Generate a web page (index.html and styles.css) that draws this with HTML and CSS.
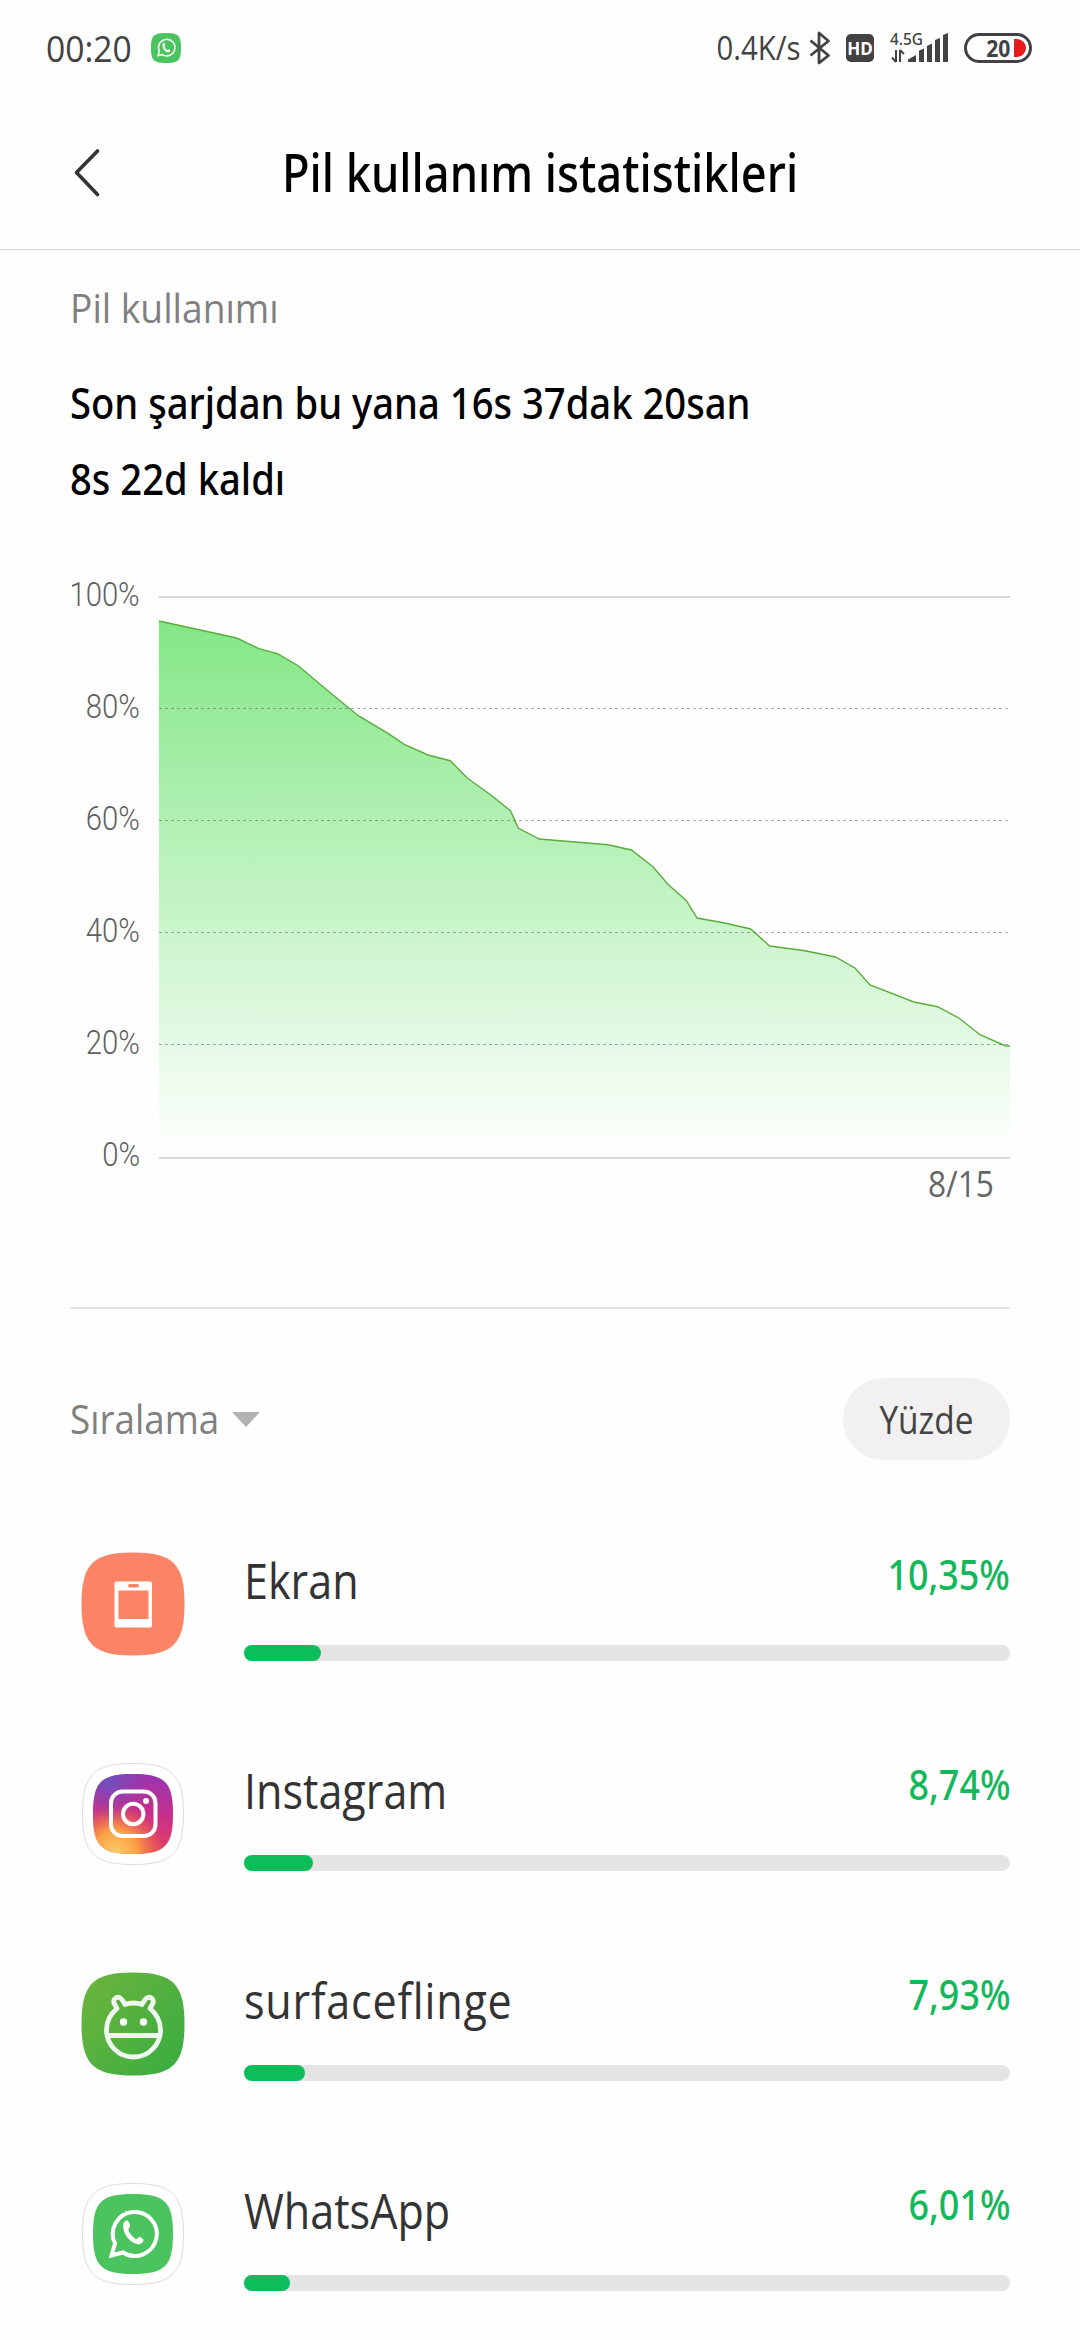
FILE: index.html
```html
<!DOCTYPE html>
<html lang="tr">
<head>
  <meta charset="UTF-8" />
  <meta name="viewport" content="width=device-width, initial-scale=1.0"/>
  <title>Pil kullanım istatistikleri</title>
  <link rel="stylesheet" href="styles.css">
</head>
<body>
  <div class="status-bar">
    <span class="clock">00:20</span>
    <svg class="notif-icon" viewBox="0 0 80 80">
      <path d="M40 0C73 0 80 7 80 40S73 80 40 80 0 73 0 40 7 0 40 0Z" fill="#4bc35f"/>
      <path d="M18.500 60.500L22 48.500A22 22 0 1 1 30 57.500Z" fill="none" stroke="#fff" stroke-width="4" stroke-linejoin="round"/>
      <path d="M31.500 27C35 24.500 36.500 27 37.500 32 38 34 35.500 34.500 36 36.500 37.500 40.500 41 44 44 45.500 46 46 46 42.500 48 43.500L51.500 46C52 49 48 52 44.500 51.500 36 50 28.500 38 31.500 27Z" fill="#fff"/>
    </svg>

    <div class="status-right">
      <span class="speed">0.4K/s</span>
      <svg class="bluetooth" viewBox="0 0 22 34">
        <path d="M1.500 9.500L19.500 24.500 10 32V2L19.500 10 1.500 24.500" fill="none" stroke="#424242" stroke-width="2.800" stroke-linejoin="round"/>
      </svg>
      <span class="hd">HD</span>
      <svg class="signal" viewBox="0 0 60 32">
        <text x="0" y="13" class="net" textLength="33" lengthAdjust="spacingAndGlyphs">4.5G</text>
        <path d="M6 18V30M6 30L2 25.500M10 30V18M10 18L14 22" fill="none" stroke="#424242" stroke-width="2"/>
        <path d="M18 30v-2.500l8-4.500v7zM29 30V18.500l5-2V30zM37 30V14l5-2.500V30zM45 30V8l5-2V30zM53 30V3l5-2V30z" fill="#424242"/>
      </svg>
      <div class="battery">
        <span>20</span>
        <i class="battery-level"></i>
      </div>
    </div>
  </div>

  <header class="title-bar">
    <svg class="back" viewBox="0 0 26 48">
      <path d="M23.500 2L2.500 23.500 23.500 45.500" fill="none" stroke="#333" stroke-width="3.600" stroke-linecap="round" stroke-linejoin="round"/>
    </svg>
    <h1>Pil kullanım istatistikleri</h1>
  </header>

  <main>
    <h2>Pil kullanımı</h2>
    <p class="summary">Son şarjdan bu yana 16s 37dak 20san</p>
    <p class="summary">8s 22d kaldı</p>

    <div class="chart">
      <div class="y-axis">
        <span>100%</span>
        <span>80%</span>
        <span>60%</span>
        <span>40%</span>
        <span>20%</span>
        <span>0%</span>
      </div>
      <div class="plot">
        <svg viewBox="159 596 851 563">
          <defs>
            <linearGradient id="fade" gradientUnits="userSpaceOnUse" x1="0" y1="621" x2="0" y2="1158">
              <stop offset="0" stop-color="#83e786"/>
              <stop offset="1" stop-color="#fff"/>
            </linearGradient>
          </defs>
          <path d="M159 621L208.200 631.700 236.600 638 258.900 648.700 277.500 653.700 298.500 666 327.200 690.300 358.300 715.700 388 733.300 404.300 744.300 428 755 450.300 760.700 467.500 778.300 491.200 795.300 510.500 810.700 518.200 828 539.200 839 607.900 844.700 631.400 850 652.900 866.700 667.900 884.300 686.400 900.700 697.100 918 724.600 923 750.700 929 769.600 946 805 950.700 835.400 957 855 968 870 985 913.900 1002 937.500 1006.700 958.900 1018 980 1034.700 1005 1045.700 1010 1046V1158H159Z" fill="url(#fade)"/>
          <path class="curve" d="M159 621L208.200 631.700 236.600 638 258.900 648.700 277.500 653.700 298.500 666 327.200 690.300 358.300 715.700 388 733.300 404.300 744.300 428 755 450.300 760.700 467.500 778.300 491.200 795.300 510.500 810.700 518.200 828 539.200 839 607.900 844.700 631.400 850 652.900 866.700 667.900 884.300 686.400 900.700 697.100 918 724.600 923 750.700 929 769.600 946 805 950.700 835.400 957 855 968 870 985 913.900 1002 937.500 1006.700 958.900 1018 980 1034.700 1005 1045.700 1010 1046"/>
          <path class="grid-edge" d="M159 597H1010M159 1158H1010"/>
          <path class="grid-dash" d="M159 708.500H1010M159 820.500H1010M159 932.500H1010M159 1044.500H1010"/>
        </svg>
        <span class="x-label">8/15</span>
      </div>
    </div>

    <div class="sort-row">
      <div class="sort"><span>Sıralama</span><i class="caret"></i></div>
      <button class="pill"><span>Yüzde</span></button>
    </div>

    <ul class="apps">
      <li class="app">
        <svg class="app-icon" viewBox="0 0 104 104">
          <path d="M52 0.500C92 0.500 103.500 12 103.500 52S92 103.500 52 103.500 0.500 92 0.500 52 12 0.500 52 0.500Z" fill="#fb8467"/>
          <rect x="33.500" y="29.500" width="37.500" height="46" rx="2" fill="#fff"/>
          <rect x="37.500" y="38.500" width="30" height="28.500" fill="#fb8467"/>
          <rect x="47" y="32" width="11" height="3.500" rx="1.700" fill="#fb8467"/>
        </svg>
        <div class="app-body">
          <div class="app-line"><span class="name">Ekran</span><span class="percent">10,35%</span></div>
          <div class="track"><div class="fill" style="width:10%"></div></div>
        </div>
      </li>
      <li class="app">
        <svg class="app-icon" viewBox="0 0 104 104">
          <defs>
            <linearGradient id="ig" x1="0.550" y1="0" x2="0.400" y2="1">
              <stop offset="0" stop-color="#9a34b0"/>
              <stop offset="0.500" stop-color="#cc2f86"/>
              <stop offset="1" stop-color="#e8475a"/>
            </linearGradient>
            <radialGradient id="ig-warm" cx="0.280" cy="0.980" r="0.620">
              <stop offset="0" stop-color="#fbca68"/>
              <stop offset="0.450" stop-color="#fba045"/>
              <stop offset="1" stop-color="#f0603f" stop-opacity="0"/>
            </radialGradient>
            <radialGradient id="ig-cold" cx="0.200" cy="0.080" r="0.500">
              <stop offset="0" stop-color="#6a52c0"/>
              <stop offset="1" stop-color="#8a3fb8" stop-opacity="0"/>
            </radialGradient>
          </defs>
          <path class="app-ring" d="M52 1.500C91 1.500 102.500 13 102.500 52S91 102.500 52 102.500 1.500 91 1.500 52 13 1.500 52 1.500Z"/>
          <path d="M52 12C84 12 92 20 92 52S84 92 52 92 12 84 12 52 20 12 52 12Z" fill="url(#ig)"/>
          <path d="M52 12C84 12 92 20 92 52S84 92 52 92 12 84 12 52 20 12 52 12Z" fill="url(#ig-warm)"/>
          <path d="M52 12C84 12 92 20 92 52S84 92 52 92 12 84 12 52 20 12 52 12Z" fill="url(#ig-cold)"/>
          <rect x="30" y="29.500" width="44.500" height="44.500" rx="11.500" fill="none" stroke="#fff" stroke-width="4"/>
          <circle cx="52.200" cy="52" r="10.200" fill="none" stroke="#fff" stroke-width="4"/>
          <circle cx="65" cy="39" r="3" fill="#fff"/>
        </svg>
        <div class="app-body">
          <div class="app-line"><span class="name">Instagram</span><span class="percent">8,74%</span></div>
          <div class="track"><div class="fill" style="width:9%"></div></div>
        </div>
      </li>
      <li class="app">
        <svg class="app-icon" viewBox="0 0 104 104">
          <defs>
            <linearGradient id="droid" x1="0" y1="0.100" x2="1" y2="0.900">
              <stop offset="0" stop-color="#6cb43c"/>
              <stop offset="1" stop-color="#39ac40"/>
            </linearGradient>
          </defs>
          <path d="M52 0.500C92 0.500 103.500 12 103.500 52S92 103.500 52 103.500 0.500 92 0.500 52 12 0.500 52 0.500Z" fill="url(#droid)"/>
          <g fill="none" stroke="#eff8ee" stroke-width="4.800" stroke-linejoin="round" stroke-linecap="round">
            <path d="M36 36.500L33.200 31.500C31.500 27.500 35 24.500 38.500 25.500 40.500 26.200 41.500 28.500 44 32.500Q52.500 29.500 61 32.500C63.500 28.500 64.500 26.200 66.500 25.500 70 24.500 73.500 27.500 71.800 31.500L69 36.500C75 41.500 79.500 49 79.500 58A27 27 0 0 1 25.500 58C25.500 49 30 41.500 36 36.500Z"/>
            <path d="M26.500 63.500H78.500"/>
          </g>
          <circle cx="42.500" cy="50" r="3.700" fill="#fff"/>
          <circle cx="62.500" cy="50" r="3.700" fill="#fff"/>
        </svg>
        <div class="app-body">
          <div class="app-line"><span class="name loose">surfaceflinge</span><span class="percent">7,93%</span></div>
          <div class="track"><div class="fill" style="width:8%"></div></div>
        </div>
      </li>
      <li class="app">
        <svg class="app-icon" viewBox="0 0 104 104">
          <path class="app-ring" d="M52 1.500C91 1.500 102.500 13 102.500 52S91 102.500 52 102.500 1.500 91 1.500 52 13 1.500 52 1.500Z"/>
          <path d="M52 12C84 12 92 20 92 52S84 92 52 92 12 84 12 52 20 12 52 12Z" fill="#4bc35f"/>
          <path d="M30.500 73.500L34 61.500A22 22 0 1 1 42 70.500Z" fill="none" stroke="#fff" stroke-width="4" stroke-linejoin="miter"/>
          <path d="M43 40C46 37 48 38.500 49 43 49.500 46 46.500 46.500 47.500 48.500 49 52 52 55.500 55 57 57.500 57 57.500 53.500 59.500 55L62.500 57.500C62.500 61 59 63 55.500 62 46.500 59 40 48.500 43 40Z" fill="#fff"/>
        </svg>
        <div class="app-body">
          <div class="app-line"><span class="name">WhatsApp</span><span class="percent">6,01%</span></div>
          <div class="track"><div class="fill" style="width:6%"></div></div>
        </div>
      </li>
    </ul>
  </main>
</body>
</html>
```

FILE: styles.css
```css
* {
  box-sizing: border-box;
}

body {
  margin: 0;
  background: #fefefe;
  color: #000;
  font-family: "Open Sans", "Noto Sans", sans-serif;
  font-variant-ligatures: none;
}

svg {
  display: block;
  flex: none;
  overflow: visible;
}

.status-bar {
  display: flex;
  align-items: center;
  height: 96px;
  padding: 0 48px 0 46px;
  color: #424242;
}

.clock {
  width: 105px;
  font-size: 37px;
  line-height: 94px;
  transform: scaleX(0.91);
  transform-origin: left;
}

.notif-icon {
  width: 30px;
  height: 30px;
}

.status-right {
  display: flex;
  align-items: center;
  margin-left: auto;
}

.speed {
  margin-right: 9px;
  font-size: 33px;
  line-height: 94px;
  transform: scaleX(0.89);
  transform-origin: right;
}

.bluetooth {
  width: 22px;
  height: 34px;
  margin-right: 15px;
}

.hd {
  width: 28px;
  height: 28px;
  margin-right: 16px;
  border-radius: 5px;
  background: #424242;
  color: #fff;
  font-size: 17px;
  font-weight: 700;
  line-height: 29px;
  text-align: center;
}

.signal {
  width: 60px;
  height: 32px;
  margin-right: 14px;
}

.net {
  font-family: "Noto Sans", sans-serif;
  font-size: 17px;
  font-weight: 500;
  fill: #424242;
}

.battery {
  display: flex;
  align-items: center;
  justify-content: flex-end;
  gap: 4px;
  width: 68px;
  height: 30px;
  padding-right: 3px;
  border: 3px solid #424242;
  border-radius: 15px;
  font-size: 24px;
  font-weight: 700;
  line-height: 24px;
}

.battery span {
  transform: scaleX(0.88);
  transform-origin: right;
}

.battery-level {
  width: 12px;
  height: 18px;
  border-radius: 0 9px 9px 0;
  background: #e81c1c;
}

.title-bar {
  display: flex;
  align-items: center;
  height: 154px;
  padding: 0 74px;
  border-bottom: 1px solid #d6d6d6;
}

.back {
  width: 26px;
  height: 48px;
}

h1 {
  flex: 1;
  margin: 0 26px 2px 0;
  font-family: "Noto Sans", sans-serif;
  font-size: 52px;
  font-weight: 500;
  line-height: 70px;
  text-align: center;
  transform: scaleX(0.87);
}

main {
  padding: 28px 70px 0;
}

h2 {
  margin: 0 0 26px;
  color: #808080;
  font-size: 40px;
  font-weight: 400;
  line-height: 60px;
  transform: scaleX(0.93);
  transform-origin: left;
}

.summary {
  margin: 0;
  font-family: "Noto Sans", sans-serif;
  font-size: 44px;
  font-weight: 500;
  line-height: 76px;
  transform: scaleX(0.868);
  transform-origin: left;
}

.chart {
  display: flex;
  margin-top: 22px;
  padding-bottom: 97px;
  border-bottom: 2px solid #e4e4e4;
}

.y-axis {
  display: flex;
  flex-direction: column;
  width: 89px;
  padding-right: 19px;
  color: #606060;
  font-family: Roboto, sans-serif;
  font-size: 34px;
  font-weight: 300;
  line-height: 112px;
  text-align: right;
}

.y-axis span {
  align-self: flex-end;
  transform: scaleX(0.86);
  transform-origin: right;
}

.plot {
  display: flex;
  flex-direction: column;
  padding-top: 58px;
}

.plot svg {
  width: 851px;
  height: 563px;
}

.curve {
  fill: none;
  stroke: #5aad3c;
  stroke-width: 1.4;
}

.grid-edge {
  stroke: #d8d8d8;
  stroke-width: 2;
}

.grid-dash {
  stroke: #666;
  stroke-opacity: 0.55;
  stroke-width: 1;
  stroke-dasharray: 3 3;
}

.x-label {
  align-self: flex-end;
  margin-right: 16px;
  color: #666;
  font-size: 36px;
  line-height: 50px;
  transform: scaleX(0.88);
  transform-origin: right;
}

.sort-row {
  display: flex;
  align-items: center;
  justify-content: space-between;
  margin-top: 69px;
}

.sort {
  display: flex;
  align-items: center;
  color: #808080;
  font-size: 40px;
  line-height: 80px;
}

.sort span {
  width: 162px;
  transform: scaleX(0.92);
  transform-origin: left;
}

.caret {
  border: 14px solid transparent;
  border-top: 15px solid #b2b2b2;
  border-bottom: 0;
}

.pill {
  width: 167px;
  height: 82px;
  padding: 0;
  border: none;
  border-radius: 41px;
  background: #f1f1f1;
  color: #444;
  font: inherit;
  font-size: 38px;
}

.pill span {
  display: inline-block;
  transform: scaleX(0.88);
}

.apps {
  margin: 39px 0 0;
  padding: 0;
  list-style: none;
}

.app {
  display: flex;
  height: 210px;
}

.app-icon {
  width: 104px;
  height: 104px;
  margin: 53px 59px 0 11px;
}

.app-ring {
  fill: #fff;
  stroke: #dcdce8;
  stroke-width: 1;
}

.app-body {
  flex: 1;
  padding-top: 49px;
}

.app-line {
  display: flex;
  align-items: flex-start;
  justify-content: space-between;
  height: 64px;
}

.name {
  color: #333;
  font-size: 49px;
  line-height: 64px;
  transform: scaleX(0.88);
  transform-origin: left;
}

.loose {
  letter-spacing: 0.9px;
}

.percent {
  color: #12b85a;
  font-family: "Noto Sans", sans-serif;
  font-size: 41px;
  font-weight: 500;
  line-height: 52px;
  transform: scaleX(0.875);
  transform-origin: right;
}

.track {
  height: 16px;
  margin-top: 33px;
  border-radius: 8px;
  background: #e4e4e4;
}

.fill {
  height: 16px;
  border-radius: 8px;
  background: #0bbd5b;
}
```
